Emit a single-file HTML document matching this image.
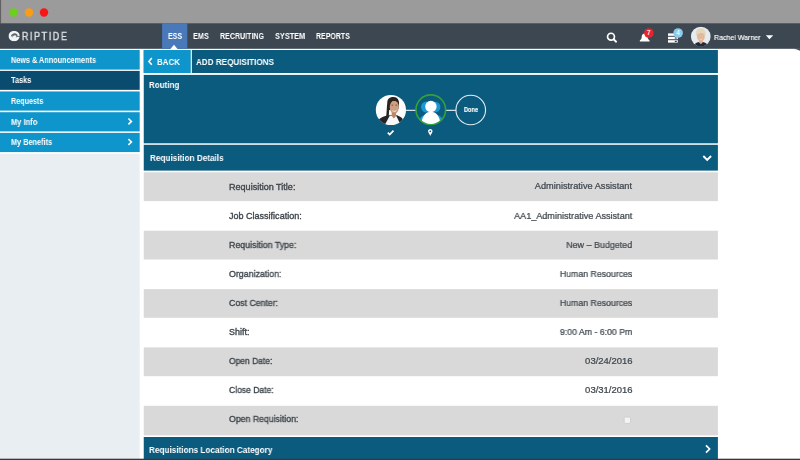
<!DOCTYPE html>
<html>
<head>
<meta charset="utf-8">
<title>Riptide - Add Requisitions</title>
<style>
*{box-sizing:border-box;margin:0;padding:0}
html,body{width:800px;height:460px;overflow:hidden;background:#fff}
body{font-family:"Liberation Sans",sans-serif;position:relative}
.a,.t{position:absolute}
.t{white-space:nowrap;will-change:transform}

</style>
</head>
<body>
<svg class="a" style="left:0;top:0" width="800" height="460" viewBox="0 0 800 460">
  <defs>
    <clipPath id="cu"><circle cx="10" cy="10.100" r="9.900"/></clipPath>
    <clipPath id="c1"><circle cx="20.900" cy="20" r="15.100"/></clipPath>
    <clipPath id="c2"><circle cx="60.800" cy="19.700" r="14.200"/></clipPath>
  </defs>
  <!-- page -->
  <rect width="800" height="460" fill="#fff"/>
  <!-- title bar -->
  <rect x="0" y="0" width="800" height="23.500" fill="#9b9b9b"/>
  <rect x="0" y="0" width="1.100" height="23.500" fill="#626262"/>
  <circle cx="13.800" cy="12.500" r="4.200" fill="#6bd01c"/>
  <circle cx="29" cy="12.500" r="4.200" fill="#fc9b14"/>
  <circle cx="44" cy="12.500" r="4.200" fill="#fc1414"/>
  <!-- nav -->
  <rect x="0" y="23.200" width="800" height="25.600" fill="#3c4751"/>
  <path d="M794.500 48.600H800V50.800C798.500 50.100 797 49.200 794.500 49z" fill="#3c4751"/>
  <rect x="162.100" y="23.200" width="25.200" height="25.600" fill="#4a79ba"/>
  <path d="M170.400 49L173.950 44.800L177.500 49z" fill="#fff"/>
  <!-- logo mark -->
  <svg x="8.400" y="30.700" width="11.400" height="10.700" viewBox="0 0 20 20" preserveAspectRatio="none">
    <circle cx="10" cy="10" r="9.900" fill="#f1f3f4"/>
    <path d="M4.500 9.500C6 6 9.500 4.300 12.800 5.200c2.600.7 4 3 3.300 5.200-.5 1.700-2.300 2.600-3.900 2 1.300-.2 2.100-1.400 1.600-2.600-.7-1.700-3.600-1.800-5.300.2-.9 1-1.300 2.300-1.200 3.500-.6-1.500-.6-2.800.2-4.300-1 .5-1.800 1.200-2.500 2.200-.5-.6-.6-1.200-.5-1.900z" fill="#5b656e"/>
    <path d="M15.800 9.800h4.200v1.500h-4.500z" fill="#3c4751"/>
  </svg>
  <!-- search -->
  <svg x="605" y="31" width="14" height="14" viewBox="0 0 14 14">
    <circle cx="6" cy="5.700" r="3.450" fill="none" stroke="#fff" stroke-width="1.700"/>
    <path d="M8.600 8.300L11.100 10.700" stroke="#fff" stroke-width="1.900" stroke-linecap="round"/>
  </svg>
  <!-- bell -->
  <svg x="637" y="28" width="20" height="18" viewBox="0 0 20 18">
    <path d="M7.700 5.600c2 0 3 1.500 3 3.400 0 1.700.7 2.600 1.900 3.500v1.100H2.800v-1.100c1.200-.9 1.900-1.800 1.900-3.500 0-1.900 1-3.400 3-3.400z" fill="#fff"/>
    <circle cx="11.900" cy="5" r="4.800" fill="#e8232f"/>
    <text x="11.800" y="7.400" font-family="Liberation Sans" font-weight="bold" font-size="6.400" text-anchor="middle" fill="#fbe4e5">7</text>
  </svg>
  <!-- stack -->
  <svg x="666" y="27" width="20" height="18" viewBox="0 0 20 18">
    <rect x="2" y="6.400" width="9.800" height="2.400" fill="#fff"/>
    <rect x="2" y="9.800" width="9.800" height="2.400" fill="#fff"/>
    <rect x="2" y="13.200" width="9.800" height="2.400" fill="#fff"/>
    <rect x="8.800" y="10.400" width="2" height="1.200" fill="#3c4751"/>
    <rect x="8.800" y="13.800" width="2" height="1.200" fill="#3c4751"/>
    <circle cx="12.100" cy="6" r="4.800" fill="#8bcbed"/>
    <text x="12" y="8.300" font-family="Liberation Sans" font-weight="bold" font-size="6.400" text-anchor="middle" fill="#eaf5fb">4</text>
  </svg>
  <!-- avatar -->
  <svg x="690.800" y="26.500" width="20" height="20" viewBox="0 0 20 20">
    <g clip-path="url(#cu)">
      <rect width="20" height="20" fill="#e6ebee"/>
      <ellipse cx="10" cy="6.600" rx="5.100" ry="4.900" fill="#e3d8bd"/>
      <path d="M3 20.500c.3-3.400 2.400-5 7-5s7 1.600 7.300 5z" fill="#1f2a3b"/>
      <path d="M8.300 13.500h3.600v2.400l-1.800 1.900-1.800-1.900z" fill="#dcae92"/>
      <ellipse cx="10.100" cy="10" rx="3.900" ry="5.100" fill="#e3b89c"/>
      <path d="M6.200 8c.8-3 3-3.800 5-3.300 1.500.4 2.500 1.500 2.800 3.300-1.600-1.800-4-2.300-7.800 0z" fill="#e3d8bd"/>
      <path d="M8.700 12.600c.8.600 2 .6 2.800 0" stroke="#f6ebe6" stroke-width=".5" fill="none"/>
    </g>
  </svg>
  <!-- caret -->
  <path d="M765.800 35.300H773.200L769.500 39.200z" fill="#fff"/>

  <!-- sidebar -->
  <rect x="0" y="153.700" width="139.700" height="306.300" fill="#e8eef2"/>
  <rect x="0" y="50" width="139.700" height="19.600" fill="#0e95cb"/>
  <rect x="0" y="70.900" width="139.700" height="18.950" fill="#0a4b70"/>
  <rect x="0" y="91.450" width="139.700" height="19.150" fill="#0e95cb"/>
  <rect x="0" y="112.200" width="139.700" height="19.200" fill="#0e95cb"/>
  <rect x="0" y="132.900" width="139.700" height="19.150" fill="#0e95cb"/>
  <path d="M128.400 118.500L131.400 121.400L128.400 124.300" fill="none" stroke="#fff" stroke-width="1.600"/>
  <path d="M128.400 139.100L131.400 142L128.400 144.900" fill="none" stroke="#fff" stroke-width="1.600"/>

  <!-- title row -->
  <rect x="143.750" y="50" width="574.150" height="23" fill="#0b5b7f"/>
  <rect x="143.750" y="50" width="47.100" height="23" fill="#0e95cb"/>
  <rect x="190.700" y="50" width="1.200" height="23" fill="#f2f6f8"/>
  <path d="M151.800 58L148.900 61.400L151.800 64.800" fill="none" stroke="#fff" stroke-width="1.600"/>

  <!-- routing -->
  <rect x="143.750" y="74.900" width="574.150" height="68.400" fill="#0b5b7f"/>
  <svg x="370" y="90" width="120" height="50" viewBox="0 0 120 50">
    <path d="M35.500 20.400H46M76 20.400H86" stroke="#d3e2ea" stroke-width="1.100"/>
    <circle cx="20.900" cy="20" r="15.100" fill="#fdfdfd"/>
    <g clip-path="url(#c1)">
      <path d="M17.300 12.500C17.300 8.500 20.500 6.800 23.800 7c3.600.2 5.500 3 5.200 7l-.5 5-9.300 1-.5 6.800-2.500-.6c.5-4 .6-9.500 1.100-13.700z" fill="#2b221e"/>
      <ellipse cx="24.300" cy="17.300" rx="4.500" ry="6.700" fill="#cd9f83"/>
      <path d="M18.600 12.500c1.500-3.300 8.500-4 10.300 0-2.500-2-7-2.300-10.300 0z" fill="#2b221e"/>
      <path d="M6 36c1-7 4-8.500 12-10.800h9c5 1.800 7 3.800 8 10.800z" fill="#232428"/>
      <path d="M19.700 25.800h6.500l4.800 9.700H14.500z" fill="#f7f7f7"/>
      <path d="M21.700 22.500h4.300v3.600l-2.100 2.400-2.200-2.400z" fill="#bb876a"/>
      <path d="M22.600 20.700c1 .9 2.800.9 3.700-.1" stroke="#fff" stroke-width=".8" fill="none"/>
      <path d="M21.500 15.200h1.600M25.500 15.200h1.600" stroke="#4a3328" stroke-width=".7"/>
    </g>
    <circle cx="60.800" cy="19.700" r="14.800" fill="#0b5b7f" stroke="#34a238" stroke-width="1.600"/>
    <g clip-path="url(#c2)">
      <circle cx="56.600" cy="17" r="5.600" fill="#1a98d4"/>
      <circle cx="65.100" cy="17" r="5.300" fill="#1a98d4"/>
      <path d="M48.500 36c0-7 3-11.500 8.500-11.500h8c5.500 0 8.500 4.500 8.500 11.500z" fill="#1a98d4"/>
      <circle cx="60.900" cy="16.500" r="5.700" fill="#fff"/>
      <path d="M51.300 36c0-9.200 4-14.300 9.600-14.300s9.600 5.100 9.600 14.300z" fill="#fff"/>
    </g>
    <circle cx="100.750" cy="20" r="14.800" fill="none" stroke="#e3edf2" stroke-width="1.100"/>
    <path d="M17.800 42.700l1.900 1.900 3.800-3.900" fill="none" stroke="#fff" stroke-width="1.700"/>
    <path d="M60.300 39.100c-1.400 0-2.200 1-2.200 2.200 0 1.400 1.500 2.900 2.200 4.600.7-1.700 2.200-3.200 2.200-4.600 0-1.200-.8-2.200-2.200-2.200z" fill="#fff"/>
    <circle cx="60.300" cy="41.300" r=".85" fill="#0b5b7f"/>
  </svg>

  <!-- requisition details header -->
  <rect x="143.750" y="144.800" width="574.150" height="25.800" fill="#0b5b7f"/>
  <path d="M703.300 156L707.200 159.900L711.100 156" fill="none" stroke="#fff" stroke-width="1.900"/>

  <!-- rows -->
  <rect x="143.750" y="172.300" width="574.150" height="28.800" fill="#d9d9d9"/>
  <rect x="143.750" y="230.700" width="574.150" height="28.800" fill="#d9d9d9"/>
  <rect x="143.750" y="289.100" width="574.150" height="28.700" fill="#d9d9d9"/>
  <rect x="143.750" y="347.400" width="574.150" height="28.800" fill="#d9d9d9"/>
  <rect x="143.750" y="405.800" width="574.150" height="29.600" fill="#d9d9d9"/>
  <rect x="624.200" y="417.100" width="6.300" height="6.300" rx="1.200" fill="#f4f4f4" stroke="#c6c6c6" stroke-width=".7"/>

  <!-- location category header -->
  <rect x="143.750" y="437" width="574.150" height="23" fill="#0b5b7f"/>
  <path d="M706 445.300L709.600 449L706 452.700" fill="none" stroke="#fff" stroke-width="1.700"/>
  <rect x="0" y="458.700" width="800" height="1.300" fill="#383838"/>
</svg>

<div class="t" style="left:21.5px;transform-origin:0 50%;top:30.9px;line-height:12.0px;color:#dde0e3;font-size:10.0px;font-weight:normal;letter-spacing:1.9px;-webkit-text-stroke:0.42px #dde0e3;transform:scaleX(0.8810)">RIPTIDE</div>
<div class="t" style="left:167.7px;transform-origin:0 50%;top:30.74px;line-height:10.92px;color:#fff;font-size:9.1px;font-weight:bold;transform:scaleX(0.7691)">ESS</div>
<div class="t" style="left:192.8px;transform-origin:0 50%;top:30.74px;line-height:10.92px;color:#fff;font-size:9.1px;font-weight:bold;transform:scaleX(0.8013)">EMS</div>
<div class="t" style="left:219.8px;transform-origin:0 50%;top:30.74px;line-height:10.92px;color:#fff;font-size:9.1px;font-weight:bold;transform:scaleX(0.7775)">RECRUITING</div>
<div class="t" style="left:274.8px;transform-origin:0 50%;top:30.74px;line-height:10.92px;color:#fff;font-size:9.1px;font-weight:bold;transform:scaleX(0.8074)">SYSTEM</div>
<div class="t" style="left:316.0px;transform-origin:0 50%;top:30.74px;line-height:10.92px;color:#fff;font-size:9.1px;font-weight:bold;transform:scaleX(0.7687)">REPORTS</div>
<div class="t" style="left:714.0px;transform-origin:0 50%;top:33.32px;line-height:9.36px;color:#fff;font-size:7.8px;font-weight:normal;-webkit-text-stroke:0.15px #fff;transform:scaleX(0.8991)">Rachel Warner</div>
<div class="t" style="left:10.9px;transform-origin:0 50%;top:55.98px;line-height:9.84px;color:#fff;font-size:8.2px;font-weight:bold;transform:scaleX(0.8883)">News &amp; Announcements</div>
<div class="t" style="left:10.9px;transform-origin:0 50%;top:76.08px;line-height:9.84px;color:#fff;font-size:8.2px;font-weight:bold;transform:scaleX(0.8979)">Tasks</div>
<div class="t" style="left:10.9px;transform-origin:0 50%;top:97.18px;line-height:9.84px;color:#fff;font-size:8.2px;font-weight:bold;transform:scaleX(0.8790)">Requests</div>
<div class="t" style="left:10.9px;transform-origin:0 50%;top:117.68px;line-height:9.84px;color:#fff;font-size:8.2px;font-weight:bold;transform:scaleX(0.9143)">My Info</div>
<div class="t" style="left:10.9px;transform-origin:0 50%;top:138.18px;line-height:9.84px;color:#fff;font-size:8.2px;font-weight:bold;transform:scaleX(0.8944)">My Benefits</div>
<div class="t" style="left:156.6px;transform-origin:0 50%;top:55.6px;line-height:11.4px;color:#fff;font-size:9.5px;font-weight:bold;transform:scaleX(0.8378)">BACK</div>
<div class="t" style="left:196.2px;transform-origin:0 50%;top:55.6px;line-height:11.4px;color:#fff;font-size:9.5px;font-weight:bold;transform:scaleX(0.8531)">ADD REQUISITIONS</div>
<div class="t" style="left:149.3px;transform-origin:0 50%;top:79.36px;line-height:11.28px;color:#fff;font-size:9.4px;font-weight:bold;transform:scaleX(0.8558)">Routing</div>
<div class="t" style="left:463.6px;transform-origin:0 50%;top:105.76px;line-height:7.68px;color:#fff;font-size:6.4px;font-weight:bold;-webkit-text-stroke:0.15px #fff;transform:scaleX(0.8759)">Done</div>
<div class="t" style="left:149.5px;transform-origin:0 50%;top:152.06px;line-height:11.28px;color:#fff;font-size:9.4px;font-weight:bold;transform:scaleX(0.8721)">Requisition Details</div>
<div class="t" style="left:149.3px;transform-origin:0 50%;top:444.26px;line-height:11.28px;color:#fff;font-size:9.4px;font-weight:bold;transform:scaleX(0.8741)">Requisitions Location Category</div>
<div class="t" style="left:229.3px;transform-origin:0 50%;top:181.56px;line-height:10.68px;color:#3d454b;font-size:8.9px;font-weight:normal;-webkit-text-stroke:0.33px #3d454b;transform:scaleX(1.0196)">Requisition Title:</div>
<div class="t" style="right:167.9px;transform-origin:100% 50%;top:181.44px;line-height:10.92px;color:#3f474d;font-size:9.1px;font-weight:normal;-webkit-text-stroke:0.24px #3f474d;transform:scaleX(1.0122)">Administrative Assistant</div>
<div class="t" style="left:229.3px;transform-origin:0 50%;top:210.66px;line-height:10.68px;color:#3d454b;font-size:8.9px;font-weight:normal;-webkit-text-stroke:0.33px #3d454b;transform:scaleX(1.0163)">Job Classification:</div>
<div class="t" style="right:167.9px;transform-origin:100% 50%;top:210.54px;line-height:10.92px;color:#3f474d;font-size:9.1px;font-weight:normal;-webkit-text-stroke:0.24px #3f474d;transform:scaleX(0.9993)">AA1_Administrative Assistant</div>
<div class="t" style="left:229.3px;transform-origin:0 50%;top:239.76px;line-height:10.68px;color:#3d454b;font-size:8.9px;font-weight:normal;-webkit-text-stroke:0.33px #3d454b;transform:scaleX(0.9908)">Requisition Type:</div>
<div class="t" style="right:167.9px;transform-origin:100% 50%;top:239.64px;line-height:10.92px;color:#3f474d;font-size:9.1px;font-weight:normal;-webkit-text-stroke:0.24px #3f474d;transform:scaleX(0.9814)">New – Budgeted</div>
<div class="t" style="left:229.3px;transform-origin:0 50%;top:268.86px;line-height:10.68px;color:#3d454b;font-size:8.9px;font-weight:normal;-webkit-text-stroke:0.33px #3d454b;transform:scaleX(0.9925)">Organization:</div>
<div class="t" style="right:167.9px;transform-origin:100% 50%;top:268.74px;line-height:10.92px;color:#3f474d;font-size:9.1px;font-weight:normal;-webkit-text-stroke:0.24px #3f474d;transform:scaleX(0.9613)">Human Resources</div>
<div class="t" style="left:229.3px;transform-origin:0 50%;top:297.96px;line-height:10.68px;color:#3d454b;font-size:8.9px;font-weight:normal;-webkit-text-stroke:0.33px #3d454b;transform:scaleX(0.9854)">Cost Center:</div>
<div class="t" style="right:167.9px;transform-origin:100% 50%;top:297.84px;line-height:10.92px;color:#3f474d;font-size:9.1px;font-weight:normal;-webkit-text-stroke:0.24px #3f474d;transform:scaleX(0.9613)">Human Resources</div>
<div class="t" style="left:229.3px;transform-origin:0 50%;top:327.06px;line-height:10.68px;color:#3d454b;font-size:8.9px;font-weight:normal;-webkit-text-stroke:0.33px #3d454b;transform:scaleX(1.0082)">Shift:</div>
<div class="t" style="right:167.9px;transform-origin:100% 50%;top:326.94px;line-height:10.92px;color:#3f474d;font-size:9.1px;font-weight:normal;-webkit-text-stroke:0.24px #3f474d;transform:scaleX(0.9613)">9:00 Am - 6:00 Pm</div>
<div class="t" style="left:229.3px;transform-origin:0 50%;top:356.16px;line-height:10.68px;color:#3d454b;font-size:8.9px;font-weight:normal;-webkit-text-stroke:0.33px #3d454b;transform:scaleX(0.9539)">Open Date:</div>
<div class="t" style="right:167.9px;transform-origin:100% 50%;top:356.04px;line-height:10.92px;color:#3f474d;font-size:9.1px;font-weight:normal;-webkit-text-stroke:0.24px #3f474d;transform:scaleX(1.0414)">03/24/2016</div>
<div class="t" style="left:229.3px;transform-origin:0 50%;top:385.26px;line-height:10.68px;color:#3d454b;font-size:8.9px;font-weight:normal;-webkit-text-stroke:0.33px #3d454b;transform:scaleX(0.9617)">Close Date:</div>
<div class="t" style="right:167.9px;transform-origin:100% 50%;top:385.14px;line-height:10.92px;color:#3f474d;font-size:9.1px;font-weight:normal;-webkit-text-stroke:0.24px #3f474d;transform:scaleX(1.0414)">03/31/2016</div>
<div class="t" style="left:229.3px;transform-origin:0 50%;top:414.36px;line-height:10.68px;color:#3d454b;font-size:8.9px;font-weight:normal;-webkit-text-stroke:0.33px #3d454b;transform:scaleX(0.9835)">Open Requisition:</div>
</body>
</html>
